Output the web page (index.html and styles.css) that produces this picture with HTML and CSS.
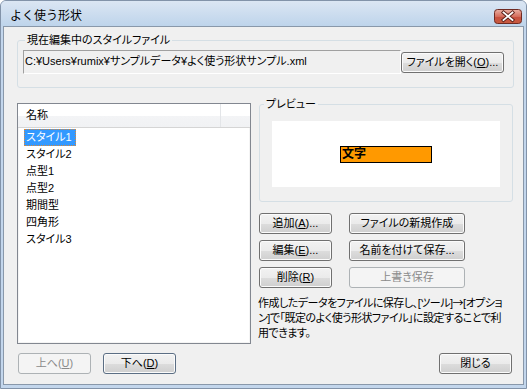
FILE: index.html
```html
<!DOCTYPE html>
<html lang="ja">
<head>
    <meta charset="UTF-8">
    <title>よく使う形状</title>
    <link rel="stylesheet" href="styles.css">
</head>
<body>

<!-- よく使う形状 ダイアログ -->
<div class="window">
    <div class="titlebar">
        <span class="title">よく使う形状</span>
        <svg class="close-btn" width="28" height="15" viewBox="0 0 28 15">
            <defs>
                <linearGradient id="closeGrad" x1="0" y1="0" x2="0" y2="1">
                    <stop offset="0" stop-color="#eab0a4"/>
                    <stop offset="0.5" stop-color="#d56d5c"/>
                    <stop offset="0.55" stop-color="#c8503f"/>
                    <stop offset="1" stop-color="#c75a3f"/>
                </linearGradient>
            </defs>
            <rect x="0.5" y="0.5" width="27" height="14" rx="3" fill="url(#closeGrad)" stroke="#6e2a22"/>
            <path d="M9.5 3.5 L18.5 11 M18.5 3.5 L9.5 11" stroke="#5b1f18" stroke-width="3.6" stroke-linecap="square"/>
            <path d="M9.5 3.5 L18.5 11 M18.5 3.5 L9.5 11" stroke="#ffffff" stroke-width="1.8" stroke-linecap="square"/>
        </svg>
    </div>

    <div class="client">
        <fieldset class="group file-group">
            <legend>現在編集中のスタイルファイル</legend>
            <div class="file-row">
                <div class="path-box">C:¥Users¥rumix¥サンプルデータ¥よく使う形状サンプル.xml</div>
                <button class="btn btn-open">ファイルを開く(<u>O</u>)...</button>
            </div>
        </fieldset>

        <div class="main">
            <!-- スタイル一覧 -->
            <div class="listview">
                <div class="lv-header">
                    <div class="lv-col">名称</div>
                    <div class="lv-col-rest"></div>
                </div>
                <ul class="lv-items">
                    <li><span class="lv-item selected">スタイル1</span></li>
                    <li><span class="lv-item">スタイル2</span></li>
                    <li><span class="lv-item">点型1</span></li>
                    <li><span class="lv-item">点型2</span></li>
                    <li><span class="lv-item">期間型</span></li>
                    <li><span class="lv-item">四角形</span></li>
                    <li><span class="lv-item">スタイル3</span></li>
                </ul>
            </div>

            <div class="side">
                <fieldset class="group preview-group">
                    <legend>プレビュー</legend>
                    <div class="preview-canvas">
                        <div class="shape">文字</div>
                    </div>
                </fieldset>

                <div class="btn-grid">
                    <button class="btn btn-small">追加(<u>A</u>)...</button>
                    <button class="btn btn-wide">ファイルの新規作成</button>
                    <button class="btn btn-small">編集(<u>E</u>)...</button>
                    <button class="btn btn-wide">名前を付けて保存...</button>
                    <button class="btn btn-small">削除(<u>R</u>)</button>
                    <button class="btn btn-wide" disabled>上書き保存</button>
                </div>

                <p class="note">作成したデータをファイルに保存し、[ツール]<span class="arrow">→</span>[オプショ<br>ン]で「既定のよく使う形状ファイル」に設定することで利<br>用できます。</p>
            </div>
        </div>

        <div class="footer">
            <button class="btn btn-small" disabled>上へ(<u>U</u>)</button>
            <button class="btn btn-small btn-focus">下へ(<u>D</u>)</button>
            <span class="spacer"></span>
            <button class="btn btn-small">閉じる</button>
        </div>
    </div>
</div>

</body>
</html>
```

FILE: styles.css
```css
body {
    margin: 0;
    background-color: #ffffff;
    font-family: "Liberation Sans", "Noto Sans CJK JP", sans-serif;
    font-size: 11px;
    color: #000000;
}

/* ウィンドウ枠 */
.window {
    width: 527px;
    height: 389px;
    box-sizing: border-box;
    border: 1px solid #8293a9;
    border-radius: 6px 6px 0 0;
    background-color: #c3d6ec;
    display: flex;
    flex-direction: column;
}

.titlebar {
    height: 25px;
    flex-shrink: 0;
    display: flex;
    align-items: flex-start;
    justify-content: space-between;
    padding: 0 4px 0 9px;
    border-radius: 5px 5px 0 0;
    background: linear-gradient(#dbe6f3, #bed4eb);
}

.title {
    font-family: "Noto Sans CJK JP", sans-serif;
    font-size: 12px;
    line-height: 14px;
    margin-top: 7px;
}

.close-btn {
    display: block;
    margin-top: 8px;
}

/* クライアント領域 */
.client {
    flex: 1;
    margin: 0 2px 3px 2px;
    border: 1px solid #8998aa;
    background-color: #f0f0f0;
    padding: 6px 9px 0 13px;
    display: flex;
    flex-direction: column;
    font-feature-settings: "palt";
}

/* グループボックス */
.group {
    margin: 0;
    min-width: 0;
    border: 1px solid #d5dfe5;
    border-radius: 3px;
}

.group legend {
    padding: 0 2px;
    line-height: 14px;
}

.file-group {
    padding: 3px 9px 13px 5px;
}

.file-group legend {
    margin-left: 2px;
}

.file-row {
    display: flex;
    align-items: flex-start;
}

.path-box {
    flex: 1;
    height: 24px;
    box-sizing: border-box;
    padding: 3px 2px 0 1px;
    line-height: 14px;
    border-top: 1px solid #a0a0a0;
    border-left: 1px solid #a0a0a0;
    border-right: 1px solid #ffffff;
    border-bottom: 1px solid #ffffff;
    white-space: nowrap;
    overflow: hidden;
}

.btn-open {
    width: 103px;
    margin-top: 2px;
}

/* ボタン */
.btn {
    height: 21px;
    box-sizing: border-box;
    padding: 0;
    font-family: inherit;
    font-size: 11px;
    line-height: 17px;
    color: #000000;
    border: 1px solid #707070;
    border-radius: 3px;
    background: linear-gradient(#f2f2f2 0%, #ebebeb 50%, #dddddd 51%, #cfcfcf 100%);
    box-shadow: inset 0 0 0 1px #fbfbfb;
    white-space: nowrap;
    font-feature-settings: "palt";
}

.btn:disabled {
    color: #8a8a8a;
    border-color: #adb2b5;
    background: #f4f4f4;
    box-shadow: none;
}

.btn-focus {
    border-color: #5b6e84;
}

.btn-small {
    width: 73px;
}

.btn-wide {
    width: 116px;
}

/* メイン */
.main {
    display: flex;
    align-items: flex-start;
    margin-top: 9px;
}

.listview {
    width: 234px;
    height: 241px;
    margin-top: 6px;
    box-sizing: border-box;
    border: 1px solid #828790;
    background-color: #ffffff;
    box-shadow: inset 0 0 0 1px #f4f4f4;
}

.lv-header {
    display: flex;
    height: 24px;
    box-sizing: border-box;
    border-bottom: 1px solid #d5d5d5;
    background: linear-gradient(#ffffff 0%, #ffffff 50%, #f3f4f6 51%, #f1f2f4 100%);
}

.lv-col {
    width: 194px;
    padding-left: 8px;
    line-height: 23px;
    border-right: 1px solid #e3e5e8;
}

.lv-items {
    list-style: none;
    margin: 0;
    padding: 1px 0 0 6px;
}

.lv-items li {
    height: 17px;
}

.lv-item {
    display: inline-block;
    height: 17px;
    box-sizing: border-box;
    padding: 0 3px 0 1px;
    line-height: 15px;
    border: 1px solid transparent;
}

.lv-item.selected {
    background-color: #3399ff;
    color: #ffffff;
    border: 1px dotted #d9883a;
}

.side {
    width: 254px;
    margin-left: 8px;
}

.preview-group {
    padding: 10px 12px 14px 12px;
}

.preview-group legend {
    margin-left: -8px;
}

.preview-canvas {
    height: 66px;
    background-color: #ffffff;
    display: flex;
    align-items: center;
    justify-content: center;
}

.shape {
    width: 92px;
    height: 17px;
    box-sizing: border-box;
    border: 1px solid #000000;
    background-color: #ff9900;
    font-size: 12px;
    font-weight: bold;
    line-height: 15px;
    padding-left: 1px;
}

.btn-grid {
    display: grid;
    grid-template-columns: 73px 116px;
    column-gap: 17px;
    row-gap: 6px;
    margin-top: 11px;
}

.note {
    margin: 7px 0 0 -1px;
    line-height: 15px;
    letter-spacing: -0.5px;
    white-space: nowrap;
}

.note .arrow {
    font-family: "Noto Sans CJK JP", sans-serif;
    font-feature-settings: normal;
}

/* 下部ボタン */
.footer {
    display: flex;
    gap: 12px;
    margin-top: 9px;
    padding: 0 2px 0 1px;
}

.spacer {
    flex: 1;
}
```
